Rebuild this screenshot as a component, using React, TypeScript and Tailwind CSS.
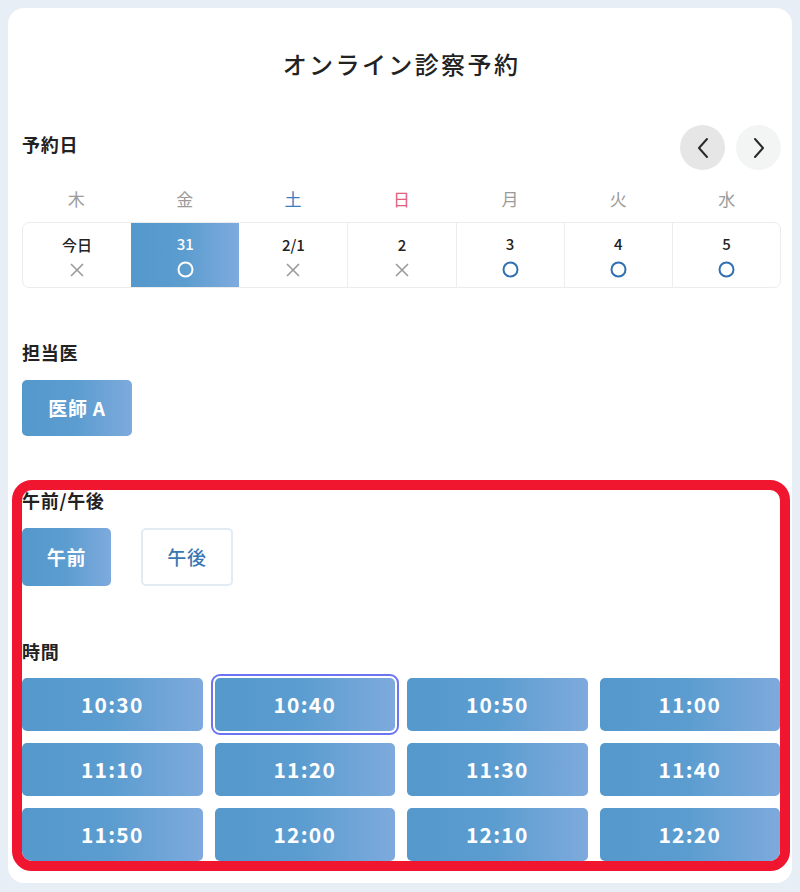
import React from "react";

const font = { fontFamily: '"Noto Sans CJK JP", "Noto Sans", sans-serif' };

const weekdays = [
  { d: "木", c: "text-[#9b9b9b]" },
  { d: "金", c: "text-[#9b9b9b]" },
  { d: "土", c: "text-[#3b7cc0]" },
  { d: "日", c: "text-[#e2617c]" },
  { d: "月", c: "text-[#9b9b9b]" },
  { d: "火", c: "text-[#9b9b9b]" },
  { d: "水", c: "text-[#9b9b9b]" },
];

const dates = [
  { l: "今日", ok: false },
  { l: "31", ok: true, sel: true },
  { l: "2/1", ok: false },
  { l: "2", ok: false },
  { l: "3", ok: true },
  { l: "4", ok: true },
  { l: "5", ok: true },
];

const times = [
  "10:30", "10:40", "10:50", "11:00",
  "11:10", "11:20", "11:30", "11:40",
  "11:50", "12:00", "12:10", "12:20",
];

function Cross() {
  return (
    <svg width="16" height="16" viewBox="0 0 16 16">
      <path d="M2 2 L14 14 M14 2 L2 14" stroke="#9a9a9a" strokeWidth="1.6" fill="none" />
    </svg>
  );
}

function Circle({ white }: { white?: boolean }) {
  return (
    <svg width="17" height="17" viewBox="0 0 17 17">
      <circle cx="8.5" cy="8.5" r="7" stroke={white ? "#ffffff" : "#2f70b2"} strokeWidth="2" fill="none" />
    </svg>
  );
}

function Chevron({ dir }: { dir: "l" | "r" }) {
  return (
    <svg width="12" height="22" viewBox="0 0 12 22">
      <path
        d={dir === "l" ? "M10 2 L2 11 L10 20" : "M2 2 L10 11 L2 20"}
        stroke="#2a2a2a"
        strokeWidth="2"
        fill="none"
        strokeLinecap="round"
        strokeLinejoin="round"
      />
    </svg>
  );
}

const grad = "bg-gradient-to-r from-[#5498cc] via-[#5c9dd0] to-[#7eaadd]";

export default function App() {
  return (
    <div className="min-h-[892px] w-[800px] bg-[#e7eef6] pt-[8px] pb-[8px]" style={font}>
      <div className="mx-[8px] rounded-[16px] bg-white pl-[14px] pr-[11px] pt-[40px] pb-[12px]">
        <h1 className="text-center text-[24px] leading-[32px] font-medium tracking-[0.1em] text-[#222]">
          オンライン診察予約
        </h1>

        <div className="mt-[45px] flex items-center justify-between">
          <div className="text-[18px] leading-[26px] font-bold tracking-[0.04em] text-[#222] -mt-[8px]">予約日</div>
          <div className="flex gap-[11px]">
            <button className="flex h-[45px] w-[45px] items-center justify-center rounded-full bg-[#e6e6e6]">
              <Chevron dir="l" />
            </button>
            <button className="flex h-[45px] w-[45px] items-center justify-center rounded-full bg-[#f3f4f4]">
              <Chevron dir="r" />
            </button>
          </div>
        </div>

        <div className="mt-[17px] grid grid-cols-7">
          {weekdays.map((w) => (
            <div key={w.d} className={`text-center text-[17px] leading-[24px] ${w.c}`}>
              {w.d}
            </div>
          ))}
        </div>

        <div className="mt-[11px] grid h-[66px] grid-cols-7 overflow-hidden rounded-[7px] border border-[#ececec]">
          {dates.map((d, i) => (
            <div
              key={d.l}
              className={`flex flex-col items-center justify-center gap-[7px] pt-[2px] ${
                d.sel ? grad : ""
              } ${i > 0 && !d.sel && !dates[i - 1].sel ? "border-l border-[#ededed]" : ""}`}
            >
              <div
                className={`text-[15px] leading-[20px] font-medium ${
                  d.sel ? "text-white" : "text-[#222]"
                }`}
              >
                {d.l}
              </div>
              {d.ok ? <Circle white={d.sel} /> : <Cross />}
            </div>
          ))}
        </div>

        <div className="mt-[51px] text-[18px] leading-[26px] font-bold tracking-[0.04em] text-[#222]">担当医</div>
        <button
          className={`mt-[15px] flex h-[56px] w-[110px] items-center justify-center rounded-[5px] text-[19px] font-bold tracking-[0.04em] text-white ${grad}`}
        >
          医師 A
        </button>

        <div className="-ml-[10px] -mr-[9px] mt-[44px] overflow-hidden rounded-[20px] border-[10px] border-[#f11630]">
          <div className="-mt-[2px] text-[18px] leading-[24px] font-bold tracking-[0.04em] text-[#222]">午前/午後</div>
          <div className="mt-[16px] flex gap-[30px]">
            <button
              className={`flex h-[58px] w-[89px] items-center justify-center rounded-[5px] text-[19px] font-bold tracking-[0.04em] text-white ${grad}`}
            >
              午前
            </button>
            <button className="flex h-[58px] w-[92px] items-center justify-center rounded-[5px] border-2 border-[#e2ebf3] bg-white text-[19px] font-medium tracking-[0.04em] text-[#3b78b3]">
              午後
            </button>
          </div>

          <div className="mt-[53px] text-[18px] leading-[24px] font-bold tracking-[0.04em] text-[#222]">時間</div>
          <div className="mt-[15px] grid grid-cols-4 gap-[12px]">
            {times.map((t) => (
              <button
                key={t}
                className={`flex h-[53px] items-center justify-center rounded-[5px] text-[21px] font-bold tracking-[0.06em] text-white ${grad} ${
                  t === "10:40" ? "ring-2 ring-white ring-offset-0 outline-2 outline-offset-2 outline-[#6c74f2]" : ""
                }`}
              >
                {t}
              </button>
            ))}
          </div>
        </div>
      </div>
    </div>
  );
}
